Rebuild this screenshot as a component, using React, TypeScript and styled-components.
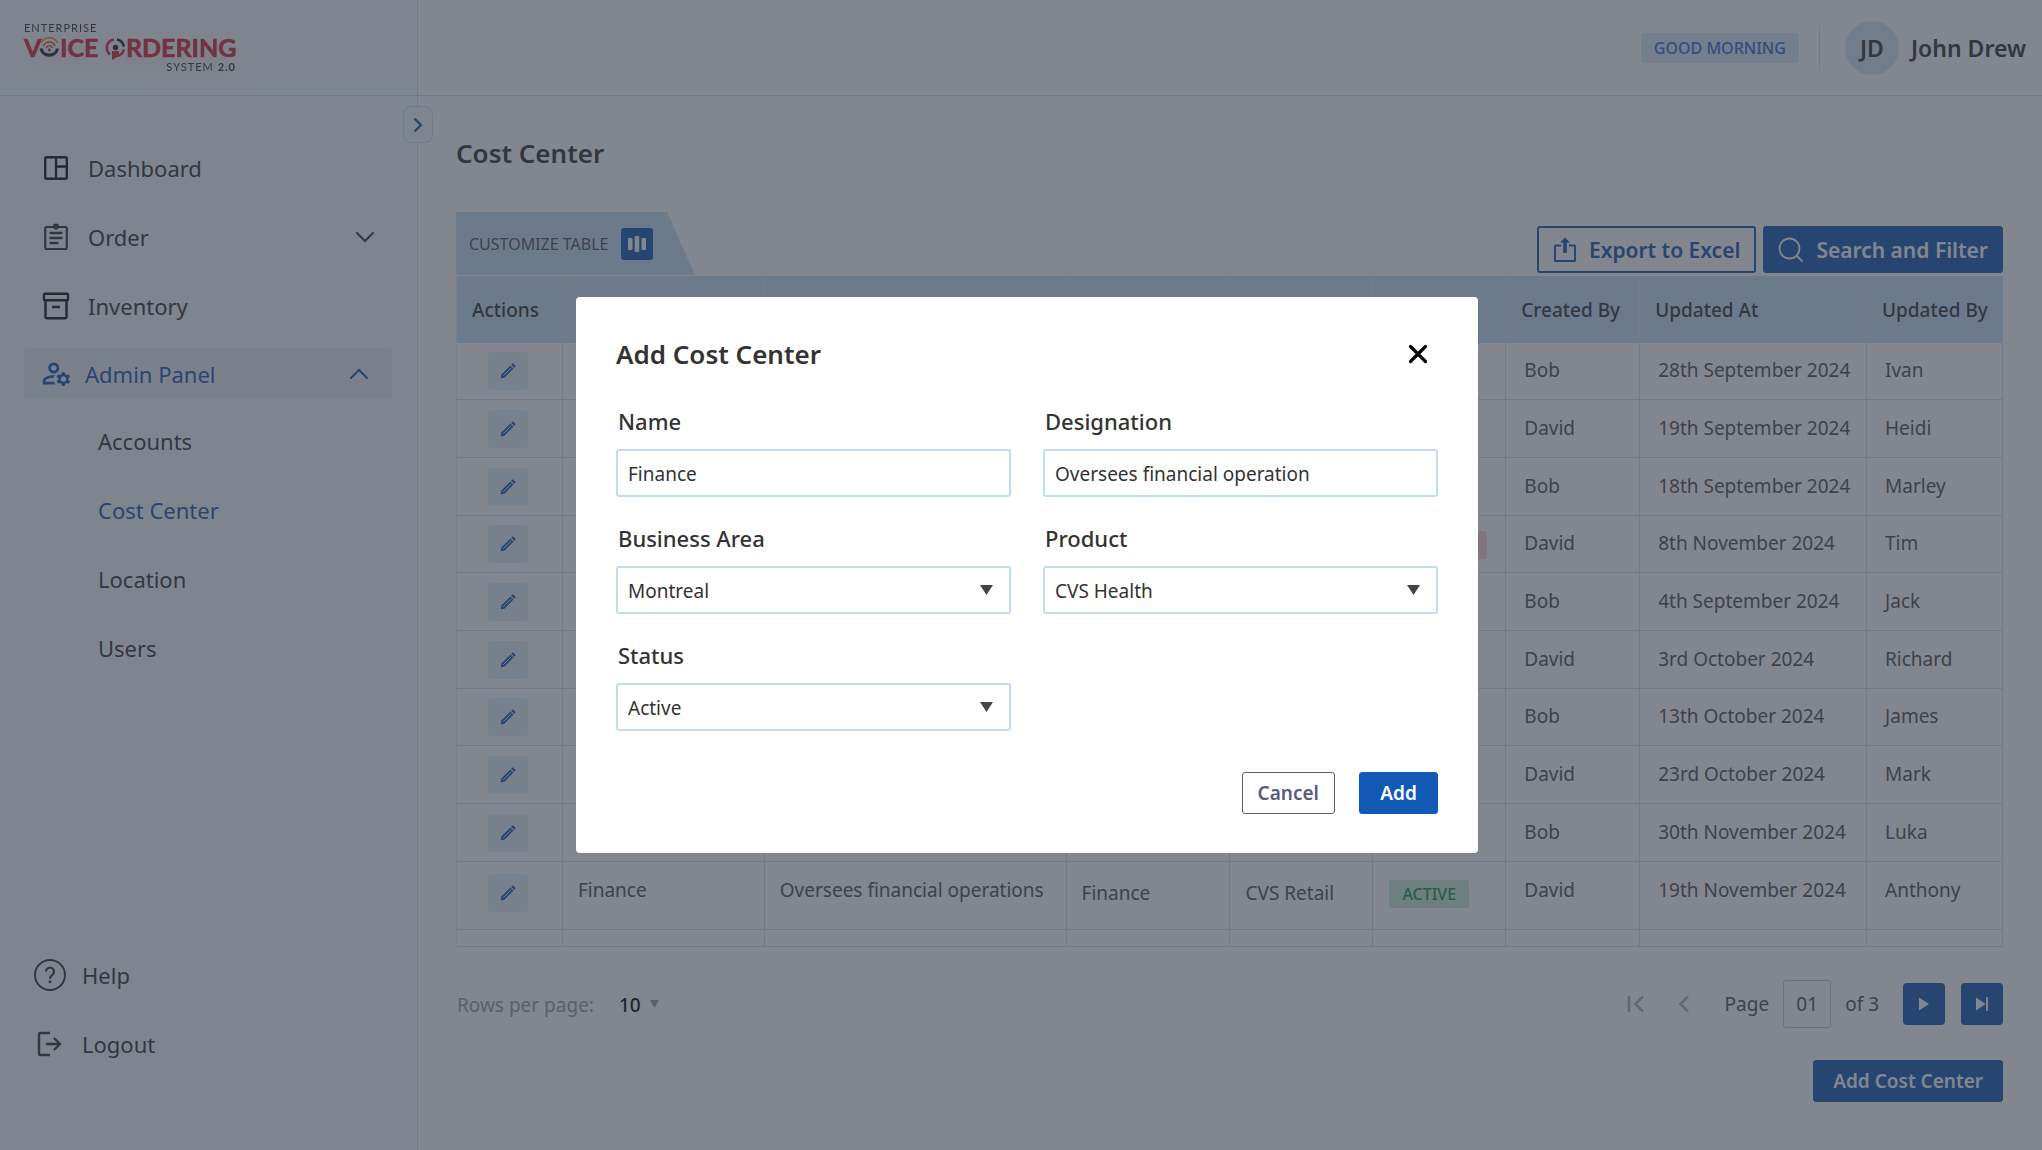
import React from "react";
import styled, { createGlobalStyle, css } from "styled-components";
import { MdOutlineManageAccounts } from "react-icons/md";

const color = {
  primary: "#1259b5",
  text: "#333333",
  muted: "#4f4f4f",
  faint: "#9b9b9b",
  line: "#cbdff5",
  control: "#c2dbf4",
  softLine: "#e2eefa",
  head: "#c6e2fa",
  tint: "#e3f0fc",
  sidebar: "#f8fcff",
};

const GlobalStyle = createGlobalStyle`
  *, *::before, *::after { box-sizing: border-box; }
  body {
    margin: 0;
    background: #ffffff;
    color: ${color.text};
    font-family: "Noto Sans", "Open Sans", sans-serif;
    font-size: 19px;
    line-height: 28px;
  }
  button, input, select { font: inherit; color: inherit; margin: 0; }
  button { cursor: pointer; }
  svg { display: block; flex-shrink: 0; }
`;

/* ---------- Shell ---------- */

const Shell = styled.div`
  display: flex;
  min-height: 100vh;
`;

const Sidebar = styled.aside`
  position: relative;
  display: flex;
  flex-direction: column;
  flex: 0 0 418px;
  background: ${color.sidebar};
  border-right: 1px solid ${color.line};
`;

const Brand = styled.div`
  height: 96px;
  padding: 20px 24px;
  border-bottom: 1px solid ${color.line};
`;

const CollapseButton = styled.button`
  position: absolute;
  top: 106px;
  right: -16px;
  display: grid;
  place-items: center;
  width: 30px;
  height: 37px;
  padding: 0;
  background: ${color.sidebar};
  border: 1px solid ${color.line};
  border-radius: 8px;
  color: ${color.primary};
`;

const Nav = styled.nav`
  display: flex;
  flex-direction: column;
  gap: 15px;
  padding: 45px 25px 0 24px;
`;

const NavItem = styled.a<{ $open?: boolean }>`
  display: flex;
  align-items: center;
  gap: 18px;
  height: 54px;
  padding: 0 17px 0 18px;
  border-radius: 4px;
  color: ${color.text};
  font-size: 22px;
  text-decoration: none;
  ${(p) =>
    p.$open &&
    css`
      gap: 15px;
      height: 51px;
      padding-right: 23px;
      background: #ecf0fb;
      color: ${color.primary};
    `}
`;

const NavIcon = styled.span`
  display: flex;
  justify-content: center;
  flex: 0 0 28px;
  min-width: 0;
`;

const NavLabel = styled.span`
  flex: 1;
`;

const SubItem = styled.a<{ $current?: boolean }>`
  display: flex;
  align-items: center;
  height: 54px;
  padding-left: 74px;
  color: ${(p) => (p.$current ? color.primary : color.text)};
  font-size: 22px;
  text-decoration: none;
`;

const NavFooter = styled.div`
  display: flex;
  flex-direction: column;
  gap: 15px;
  margin-top: auto;
  padding: 0 34px 79px;
`;

const FooterItem = styled.a`
  display: flex;
  align-items: center;
  gap: 16px;
  height: 54px;
  color: ${color.text};
  font-size: 22px;
  text-decoration: none;
`;

const FooterIcon = styled.span`
  display: flex;
  justify-content: center;
  flex: 0 0 32px;
`;

const Page = styled.div`
  display: flex;
  flex-direction: column;
  flex: 1;
  min-width: 0;
`;

const TopBar = styled.header`
  display: flex;
  align-items: center;
  justify-content: flex-end;
  height: 96px;
  padding: 0 16px;
  border-bottom: 1px solid ${color.line};
`;

const Greeting = styled.span`
  padding: 1px 13px;
  background: #dce9fb;
  border-radius: 3px;
  color: #2f6ae0;
  font-size: 16px;
  font-weight: 500;
`;

const Divider = styled.span`
  width: 1px;
  height: 46px;
  margin: 0 25px 0 20px;
  background: ${color.line};
`;

const Avatar = styled.span`
  display: grid;
  place-items: center;
  width: 54px;
  height: 54px;
  margin-right: 12px;
  background: #d3e8f8;
  border-radius: 50%;
  font-size: 23px;
  font-weight: 600;
`;

const UserName = styled.span`
  font-size: 23px;
  font-weight: 600;
`;

const Content = styled.main`
  padding: 39px 39px 48px 38px;
`;

const Heading = styled.h1`
  margin: 0 0 41px;
  font-size: 26px;
  font-weight: 600;
  line-height: 36px;
`;

/* ---------- Buttons ---------- */

const Button = styled.button<{ $kind?: "outline" | "neutral"; $large?: boolean }>`
  display: inline-flex;
  align-items: center;
  justify-content: center;
  gap: 12px;
  min-width: 79px;
  height: ${(p) => (p.$large ? 47 : 42)}px;
  padding: 0 ${(p) => (p.$large ? 14 : 19)}px;
  border: 1px solid ${color.primary};
  border-radius: 3px;
  background: ${color.primary};
  color: #ffffff;
  font-size: ${(p) => (p.$large ? 21 : 19)}px;
  font-weight: 600;
  white-space: nowrap;
  ${(p) =>
    p.$kind === "outline" &&
    css`
      border-width: 2px;
      background: transparent;
      color: ${color.primary};
    `}
  ${(p) =>
    p.$kind === "neutral" &&
    css`
      padding: 0 15px;
      background: #ffffff;
      border-color: #5c5a7c;
      color: #5c5a7c;
    `}
`;

const IconButton = styled.button<{ $solid?: boolean }>`
  display: grid;
  place-items: center;
  width: ${(p) => (p.$solid ? 42 : 24)}px;
  height: 42px;
  padding: 0;
  border: 0;
  border-radius: 4px;
  background: ${(p) => (p.$solid ? color.primary : "transparent")};
  color: ${(p) => (p.$solid ? "#ffffff" : "#b0b0b0")};
`;

/* ---------- Table ---------- */

const Toolbar = styled.div`
  display: flex;
  justify-content: space-between;
  align-items: flex-end;
  height: 64px;
`;

const CustomizeTab = styled.div`
  display: flex;
  align-items: center;
  gap: 12px;
  align-self: flex-start;
  width: 239px;
  height: 63px;
  padding-left: 13px;
  background: ${color.head};
  clip-path: polygon(0 0, 211px 0, 100% 100%, 0 100%);
  color: ${color.muted};
  font-size: 16px;
`;

const ColumnsButton = styled.button`
  display: grid;
  place-items: center;
  width: 32px;
  height: 32px;
  padding: 0;
  border: 0;
  border-radius: 3px;
  background: ${color.primary};
  color: #ffffff;
`;

const Actions = styled.div`
  display: flex;
  gap: 7px;
  padding-bottom: 3px;
`;

const Table = styled.table`
  width: 100%;
  table-layout: fixed;
  border-collapse: separate;
  border-spacing: 0;
  border-left: 1px solid ${color.softLine};
`;

const Th = styled.th`
  height: 67px;
  padding: 0 0 0 15px;
  background: ${color.head};
  border-right: 1px solid #d5e8fa;
  font-weight: 500;
  text-align: left;
  white-space: nowrap;
`;

const Row = styled.tr`
  height: 58px;
  &:nth-child(3n + 1) { height: 57px; }
  &:nth-child(10) { height: 68px; }
  &:nth-child(11) { height: 17px; }
`;

const Td = styled.td<{ $inset?: boolean; $center?: boolean; $lift?: number }>`
  padding: 0 0 ${(p) => p.$lift ?? 2}px ${(p) => (p.$inset ? 18 : 15)}px;
  border-right: 1px solid ${color.line};
  border-bottom: 1px solid ${color.line};
  color: ${color.muted};
  white-space: nowrap;
  ${(p) =>
    p.$center &&
    css`
      padding-left: 0;
      padding-right: 3px;
      text-align: center;
    `}
`;

const EditButton = styled.button`
  display: inline-grid;
  place-items: center;
  width: 40px;
  height: 38px;
  padding: 0;
  border: 0;
  border-radius: 4px;
  background: ${color.tint};
  color: ${color.primary};
  vertical-align: middle;
`;

const Pill = styled.span<{ $off: boolean }>`
  display: inline-block;
  margin-left: 1px;
  padding: 0 13px;
  border-radius: 3px;
  background: ${(p) => (p.$off ? "#fbd3d5" : "#c9eed9")};
  color: ${(p) => (p.$off ? "#d92d3a" : "#159447")};
  font-size: 16px;
  font-weight: 500;
  vertical-align: middle;
`;

/* ---------- Pagination ---------- */

const Pager = styled.div`
  display: flex;
  align-items: center;
  justify-content: space-between;
  margin: 33px 0 32px;
`;

const PageSize = styled.label`
  display: flex;
  align-items: center;
  padding: 2px 0 0 1px;
  color: ${color.faint};
`;

const SizeWrap = styled.span`
  position: relative;
  display: block;
  margin-left: 25px;
  svg { position: absolute; top: 9px; right: 0; pointer-events: none; }
`;

const SizeSelect = styled.select`
  appearance: none;
  display: block;
  width: 40px;
  padding: 0;
  border: 0;
  background: transparent;
  color: #000000;
  font-weight: 500;
`;

const PageNav = styled.div`
  display: flex;
  align-items: center;
  color: ${color.muted};
`;

const PageLabel = styled.label`
  display: flex;
  align-items: center;
  gap: 14px;
  margin: 0 24px 0 29px;
`;

const PageInput = styled.input`
  width: 48px;
  height: 48px;
  padding: 0;
  border: 1px solid #a9cdf0;
  border-radius: 3px;
  background: transparent;
  text-align: center;
`;

const PageButtons = styled.div<{ $gap: number }>`
  display: flex;
  gap: ${(p) => p.$gap}px;
`;

const ContentFooter = styled.div`
  display: flex;
  justify-content: flex-end;
`;

/* ---------- Dialog ---------- */

const Overlay = styled.div`
  position: fixed;
  inset: 0;
  display: flex;
  align-items: center;
  justify-content: center;
  padding-left: 12px;
  background: rgba(51, 58, 71, 0.61);
`;

const Dialog = styled.form`
  width: 902px;
  padding: 39px 40px 39px;
  background: #ffffff;
  border-radius: 4px;
`;

const DialogHead = styled.div`
  display: flex;
  align-items: center;
  justify-content: space-between;
  margin-bottom: 34px;
  padding-right: 9px;
`;

const DialogTitle = styled.h2`
  margin: 0;
  font-size: 26px;
  font-weight: 600;
  line-height: 36px;
`;

const CloseButton = styled.button`
  display: grid;
  place-items: center;
  width: 22px;
  height: 22px;
  padding: 0;
  border: 0;
  background: transparent;
  color: #000000;
`;

const Fields = styled.div`
  display: grid;
  grid-template-columns: 1fr 1fr;
  gap: 26px 32px;
`;

const Field = styled.div`
  display: flex;
  flex-direction: column;
  gap: 13px;
`;

const FieldLabel = styled.label`
  padding-left: 2px;
  font-size: 22px;
  font-weight: 500;
  line-height: 30px;
`;

const control = css`
  width: 100%;
  height: 48px;
  padding: 2px 10px 0;
  border: 2px solid ${color.control};
  border-radius: 3px;
  background: #ffffff;
  outline: 0;
`;

const TextInput = styled.input`
  ${control}
`;

const SelectWrap = styled.span`
  position: relative;
  display: block;
  color: #444444;
  svg { position: absolute; top: 19px; right: 18px; pointer-events: none; }
`;

const Select = styled.select`
  ${control}
  appearance: none;
  color: ${color.text};
`;

const DialogActions = styled.div`
  display: flex;
  justify-content: flex-end;
  gap: 24px;
  margin-top: 41px;
`;

/* ---------- Drawings ---------- */

const LogoSvg = styled.svg`
  overflow: visible;
  filter: drop-shadow(0 8px 12px rgba(214, 40, 57, 0.12));
`;

const Logo = () => (
  <LogoSvg width="212" height="54" viewBox="0 0 212 54" role="img" aria-label="Enterprise Voice Ordering System 2.0">
    <g fontFamily="Lato, sans-serif">
      <text x="0" y="12" fontSize="11" letterSpacing="1" fill="#333">ENTERPRISE</text>
      <g fontSize="25" fontWeight="700" fill="#d62839" stroke="#d62839" strokeWidth="0.6">
        <text x="0" y="37">V</text>
        <text x="36" y="37">ICE</text>
        <text x="102" y="37">RDERING</text>
      </g>
      <text x="212" y="51" fontSize="11" letterSpacing="1" textAnchor="end" fill="#333">
        SYSTEM <tspan fontWeight="700">2.0</tspan>
      </text>
    </g>
    <g fill="none">
      <path d="M17 28.5a8.5 8.5 0 0 0 16.6 0" stroke="#222" strokeWidth="3.2" />
      <path d="M17 23a9.2 9.2 0 0 1 16.6 0" stroke="#f08a3c" strokeWidth="1.6" />
      <path d="M19.5 26a6.2 6.2 0 0 1 11.6 0" stroke="#e8503a" strokeWidth="1.6" />
      <path d="M22.2 27.8a3.3 3.3 0 0 1 6.2 0" stroke="#d62839" strokeWidth="1.4" />
      <path d="M90 19.5A8.5 8.5 0 0 0 86 34.5" stroke="#d62839" strokeWidth="2.6" />
      <path d="M93 19.5a8.5 8.5 0 0 1 6.8 7.2" stroke="#222" strokeWidth="2.6" />
      <path d="M99.8 29.5A8.5 8.5 0 0 1 93 36" stroke="#d62839" strokeWidth="2.6" />
    </g>
    <circle cx="25.3" cy="30" r="1.5" fill="#d62839" />
    <circle cx="91.5" cy="27.5" r="2.7" fill="#222" />
    <path d="M88 31h7v5l-7 4z" fill="#d62839" />
  </LogoSvg>
);

const DashboardIcon = () => (
  <svg width="26" height="26" viewBox="0 0 26 26" fill="none" stroke="#111" strokeWidth="2.4">
    <rect x="2.2" y="2.2" width="21.6" height="21.6" rx="1.5" />
    <path d="M13 2v22M13 11.5h11" />
  </svg>
);

const OrderIcon = () => (
  <svg width="26" height="28" viewBox="0 0 26 28" fill="none" stroke="currentColor" strokeWidth="2.2">
    <rect x="2.2" y="4" width="21.6" height="22" rx="1.5" />
    <circle cx="13" cy="3.6" r="2" />
    <path d="M6.5 10h13M6.5 15h13M6.5 20h9" strokeWidth="2.4" />
  </svg>
);

const InventoryIcon = () => (
  <svg width="28" height="28" viewBox="0 0 28 28" fill="none" stroke="#111" strokeWidth="2.4" strokeLinejoin="round">
    <rect x="2" y="1.8" width="24" height="6.4" rx="1" />
    <path d="M3.5 8v17q0 1.2 1.2 1.2h18.600q1.2 0 1.2-1.2V8M10 15h8" />
  </svg>
);

const Chevron = ({ up }: { up?: boolean }) => (
  <svg width="20" height="12" viewBox="0 0 20 12" fill="none" stroke="currentColor" strokeWidth="2" strokeLinecap="round">
    <path d={up ? "M2 10l8-8 8 8" : "M2 2l8 8 8-8"} />
  </svg>
);

const HelpIcon = () => (
  <svg width="32" height="32" viewBox="0 0 32 32" fill="none" stroke="currentColor" strokeWidth="2">
    <circle cx="16" cy="16" r="15" />
    <path d="M12 12.5a4 4 0 1 1 6.300 3.300c-1.7 1.2-2.3 1.8-2.3 4" strokeWidth="2.2" />
    <circle cx="16" cy="22.8" r="1.5" fill="currentColor" stroke="none" />
  </svg>
);

const LogoutIcon = () => (
  <svg width="26" height="26" viewBox="0 0 26 26" fill="none" stroke="currentColor" strokeWidth="2.4">
    <path d="M13 2H3.5Q2 2 2 3.5v19Q2 24 3.5 24H13M9 13h14M17 7l6 6-6 6" />
  </svg>
);

const PencilIcon = () => (
  <svg width="16" height="16" viewBox="0 0 16 16">
    <path d="M.8 15.2l.5-3.600L10.400 2.5l3.100 3.100L4.400 14.700z" fill="currentColor" />
    <path d="M11.200 1.7l.9-.9a1 1 0 0 1 1.400 0l1.700 1.700a1 1 0 0 1 0 1.400l-.9.9z" fill="currentColor" />
    <path d="M3.3 12.7l8-8" stroke={color.tint} strokeWidth="1" />
  </svg>
);

const ColumnsIcon = () => (
  <svg width="20" height="18" viewBox="0 0 20 18" fill="currentColor">
    <rect x="1" y="3" width="4.5" height="12" rx="1" />
    <rect x="7.7" y="1" width="4.5" height="16" rx="1" />
    <rect x="14.5" y="3" width="4.5" height="12" rx="1" />
  </svg>
);

const ExportIcon = () => (
  <svg width="24" height="26" viewBox="0 0 24 26" fill="none" stroke="currentColor" strokeWidth="2">
    <path d="M8 8.5H2.5Q2 8.5 2 9v14.5q0 .5.5.5h19q.5 0 .5-.5V9q0-.5-.5-.5H16" />
    <path d="M12 16V4" strokeWidth="3.6" />
    <path d="M7 5.5L12 .5l5 5z" fill="currentColor" stroke="none" />
  </svg>
);

const SearchIcon = () => (
  <svg width="26" height="26" viewBox="0 0 26 26" fill="none" stroke="currentColor" strokeWidth="1.8">
    <circle cx="11.5" cy="11.5" r="10" />
    <path d="M18.5 18.5l6 6" />
  </svg>
);

const Triangle = ({ width = 13, height = 10 }: { width?: number; height?: number }) => (
  <svg width={width} height={height} viewBox="0 0 13 10" preserveAspectRatio="none" fill="currentColor">
    <path d="M0 0h13L6.5 10z" />
  </svg>
);

/* ---------- Data ---------- */

const columns = [
  { label: "Actions", width: 106 },
  { label: "Name", width: 202 },
  { label: "Designation", width: 302 },
  { label: "Business Area", width: 164 },
  { label: "Product", width: 143 },
  { label: "Status", width: 133 },
  { label: "Created By", width: 134 },
  { label: "Updated At", width: 227 },
  { label: "Updated By", width: 136 },
];

type Entry = {
  name?: string;
  designation?: string;
  area?: string;
  product?: string;
  status?: "ACTIVE" | "INACTIVE";
  createdBy: string;
  updatedAt: string;
  updatedBy: string;
};

const entries: Entry[] = [
  { createdBy: "Bob", updatedAt: "28th September 2024", updatedBy: "Ivan" },
  { createdBy: "David", updatedAt: "19th September 2024", updatedBy: "Heidi" },
  { createdBy: "Bob", updatedAt: "18th September 2024", updatedBy: "Marley" },
  { status: "INACTIVE", createdBy: "David", updatedAt: "8th November 2024", updatedBy: "Tim" },
  { createdBy: "Bob", updatedAt: "4th September 2024", updatedBy: "Jack" },
  { createdBy: "David", updatedAt: "3rd October 2024", updatedBy: "Richard" },
  { createdBy: "Bob", updatedAt: "13th October 2024", updatedBy: "James" },
  { createdBy: "David", updatedAt: "23rd October 2024", updatedBy: "Mark" },
  { createdBy: "Bob", updatedAt: "30th November 2024", updatedBy: "Luka" },
  {
    name: "Finance",
    designation: "Oversees financial operations",
    area: "Finance",
    product: "CVS Retail",
    status: "ACTIVE",
    createdBy: "David",
    updatedAt: "19th November 2024",
    updatedBy: "Anthony",
  },
];

const SelectField = ({ id, label, value }: { id: string; label: string; value: string }) => (
  <Field>
    <FieldLabel htmlFor={id}>{label}</FieldLabel>
    <SelectWrap>
      <Select id={id} defaultValue={value}>
        <option>{value}</option>
      </Select>
      <Triangle />
    </SelectWrap>
  </Field>
);

export default function App() {
  return (
    <>
      <GlobalStyle />
      <Shell>
        <Sidebar>
          <Brand>
            <Logo />
          </Brand>
          <CollapseButton type="button" aria-label="Toggle sidebar">
            <svg width="10" height="16" viewBox="0 0 10 16" fill="none" stroke="currentColor" strokeWidth="2.2">
              <path d="M1.5 1.5L8 8l-6.5 6.5" />
            </svg>
          </CollapseButton>
          <Nav>
            <NavItem href="#dashboard">
              <NavIcon><DashboardIcon /></NavIcon>
              <NavLabel>Dashboard</NavLabel>
            </NavItem>
            <NavItem href="#order">
              <NavIcon><OrderIcon /></NavIcon>
              <NavLabel>Order</NavLabel>
              <Chevron />
            </NavItem>
            <NavItem href="#inventory">
              <NavIcon><InventoryIcon /></NavIcon>
              <NavLabel>Inventory</NavLabel>
            </NavItem>
            <NavItem href="#admin" $open>
              <NavIcon><MdOutlineManageAccounts size={33} /></NavIcon>
              <NavLabel>Admin Panel</NavLabel>
              <Chevron up />
            </NavItem>
            <SubItem href="#accounts">Accounts</SubItem>
            <SubItem href="#cost-center" $current>Cost Center</SubItem>
            <SubItem href="#location">Location</SubItem>
            <SubItem href="#users">Users</SubItem>
          </Nav>
          <NavFooter>
            <FooterItem href="#help">
              <FooterIcon><HelpIcon /></FooterIcon>
              Help
            </FooterItem>
            <FooterItem href="#logout">
              <FooterIcon><LogoutIcon /></FooterIcon>
              Logout
            </FooterItem>
          </NavFooter>
        </Sidebar>

        <Page>
          <TopBar>
            <Greeting>GOOD MORNING</Greeting>
            <Divider />
            <Avatar>JD</Avatar>
            <UserName>John Drew</UserName>
          </TopBar>
          <Content>
            <Heading>Cost Center</Heading>
            <Toolbar>
              <CustomizeTab>
                CUSTOMIZE TABLE
                <ColumnsButton type="button" aria-label="Choose columns">
                  <ColumnsIcon />
                </ColumnsButton>
              </CustomizeTab>
              <Actions>
                <Button type="button" $kind="outline" $large><ExportIcon />Export to Excel</Button>
                <Button type="button" $large><SearchIcon />Search and Filter</Button>
              </Actions>
            </Toolbar>
            <Table>
              <colgroup>
                {columns.map((c) => (
                  <col key={c.label} style={{ width: `${(c.width / 1547) * 100}%` }} />
                ))}
              </colgroup>
              <thead>
                <tr>
                  {columns.map((c) => (
                    <Th key={c.label} scope="col">{c.label}</Th>
                  ))}
                </tr>
              </thead>
              <tbody>
                {entries.map((e) => {
                  const tall = Boolean(e.name);
                  const lift = tall ? 12 : 2;
                  const mid = tall ? 5 : 0;
                  return (
                    <Row key={e.updatedBy}>
                      <Td $center $lift={mid}>
                        <EditButton type="button" aria-label="Edit"><PencilIcon /></EditButton>
                      </Td>
                      <Td $lift={lift}>{e.name}</Td>
                      <Td $lift={lift}>{e.designation}</Td>
                      <Td $lift={mid}>{e.area}</Td>
                      <Td $lift={mid}>{e.product}</Td>
                      <Td $lift={mid}>
                        {e.status && <Pill $off={e.status === "INACTIVE"}>{e.status}</Pill>}
                      </Td>
                      <Td $inset $lift={lift}>{e.createdBy}</Td>
                      <Td $inset $lift={lift}>{e.updatedAt}</Td>
                      <Td $inset $lift={lift}>{e.updatedBy}</Td>
                    </Row>
                  );
                })}
                <Row>
                  {columns.map((c) => (
                    <Td key={c.label} $lift={0} />
                  ))}
                </Row>
              </tbody>
            </Table>
            <Pager>
              <PageSize>
                Rows per page:
                <SizeWrap>
                  <SizeSelect defaultValue="10"><option>10</option></SizeSelect>
                  <Triangle width={9} height={8} />
                </SizeWrap>
              </PageSize>
              <PageNav>
                <PageButtons $gap={24}>
                  <IconButton type="button" aria-label="First page">
                    <svg width="18" height="18" viewBox="0 0 18 18" fill="none" stroke="currentColor" strokeWidth="2.6">
                      <path d="M2 1v16M16 1.5L8.5 9l7.5 7.5" />
                    </svg>
                  </IconButton>
                  <IconButton type="button" aria-label="Previous page">
                    <svg width="12" height="18" viewBox="0 0 12 18" fill="none" stroke="currentColor" strokeWidth="2.6">
                      <path d="M10 1.5L2.5 9l7.5 7.5" />
                    </svg>
                  </IconButton>
                </PageButtons>
                <PageLabel>
                  Page
                  <PageInput defaultValue="01" />
                  of 3
                </PageLabel>
                <PageButtons $gap={16}>
                  <IconButton type="button" aria-label="Next page" $solid>
                    <svg width="10" height="14" viewBox="0 0 10 14" fill="currentColor">
                      <path d="M0 .5v13L10 7z" />
                    </svg>
                  </IconButton>
                  <IconButton type="button" aria-label="Last page" $solid>
                    <svg width="12" height="14" viewBox="0 0 12 14" fill="currentColor">
                      <path d="M0 .5v13L9.5 7zM10 0h2v14h-2z" />
                    </svg>
                  </IconButton>
                </PageButtons>
              </PageNav>
            </Pager>
            <ContentFooter>
              <Button type="button">Add Cost Center</Button>
            </ContentFooter>
          </Content>
        </Page>
      </Shell>

      <Overlay>
        <Dialog role="dialog" aria-modal="true" aria-labelledby="dialog-title" onSubmit={(e) => e.preventDefault()}>
          <DialogHead>
            <DialogTitle id="dialog-title">Add Cost Center</DialogTitle>
            <CloseButton type="button" aria-label="Close">
              <svg width="20" height="20" viewBox="0 0 20 20" fill="none" stroke="currentColor" strokeWidth="3.2" strokeLinecap="round">
                <path d="M2.5 2.5l15 15M17.5 2.5l-15 15" />
              </svg>
            </CloseButton>
          </DialogHead>
          <Fields>
            <Field>
              <FieldLabel htmlFor="name">Name</FieldLabel>
              <TextInput id="name" defaultValue="Finance" />
            </Field>
            <Field>
              <FieldLabel htmlFor="designation">Designation</FieldLabel>
              <TextInput id="designation" defaultValue="Oversees financial operation" />
            </Field>
            <SelectField id="area" label="Business Area" value="Montreal" />
            <SelectField id="product" label="Product" value="CVS Health" />
            <SelectField id="status" label="Status" value="Active" />
          </Fields>
          <DialogActions>
            <Button type="button" $kind="neutral">Cancel</Button>
            <Button type="submit">Add</Button>
          </DialogActions>
        </Dialog>
      </Overlay>
    </>
  );
}
